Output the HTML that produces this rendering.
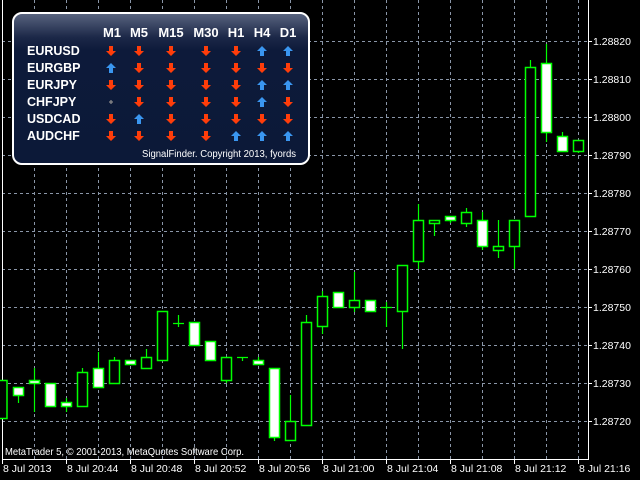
<!DOCTYPE html>
<html><head><meta charset="utf-8"><style>
html,body{margin:0;padding:0;background:#000;width:640px;height:480px;overflow:hidden}
svg{display:block}
text{font-family:"Liberation Sans",sans-serif}
</style></head><body>
<svg width="640" height="480" viewBox="0 0 640 480" xmlns="http://www.w3.org/2000/svg">
<defs>
<linearGradient id="pg" x1="0" y1="0" x2="0" y2="1">
<stop offset="0" stop-color="#5a6580"/>
<stop offset="0.16" stop-color="#1c2848"/>
<stop offset="0.25" stop-color="#0d1a3a"/>
<stop offset="1" stop-color="#0c1938"/>
</linearGradient>
<path id="dn" d="M-2,-5H2V0H5L0,5L-5,0H-2Z" fill="#ff3d0a"/>
<path id="up" d="M-2,5H2V0H5L0,-5L-5,0H-2Z" fill="#3a96f0"/>
</defs>
<g stroke="#8a96a8" stroke-width="1" stroke-dasharray="3,3">
<path d="M2,41.5H588M2,79.5H588M2,117.5H588M2,155.5H588M2,193.5H588M2,231.5H588M2,269.5H588M2,307.5H588M2,345.5H588M2,383.5H588M2,421.5H588"/>
<path d="M34.5,0V459M66.5,0V459M98.5,0V459M130.5,0V459M162.5,0V459M194.5,0V459M226.5,0V459M258.5,0V459M290.5,0V459M322.5,0V459M354.5,0V459M386.5,0V459M418.5,0V459M450.5,0V459M482.5,0V459M514.5,0V459M546.5,0V459M578.5,0V459"/>
</g>
<g stroke="#fff" stroke-width="1" fill="none">
<path d="M2.5,0V459.5H588.5V0"/>
<path d="M2.5,459V464M66.5,459V464M130.5,459V464M194.5,459V464M258.5,459V464M322.5,459V464M386.5,459V464M450.5,459V464M514.5,459V464M578.5,459V464"/>
<path d="M588,41.5H592M588,79.5H592M588,117.5H592M588,155.5H592M588,193.5H592M588,231.5H592M588,269.5H592M588,307.5H592M588,345.5H592M588,383.5H592M588,421.5H592"/>
</g>
<g fill="#fff" font-size="10.5">
<text x="593" y="45">1.28820</text><text x="593" y="83">1.28810</text><text x="593" y="121">1.28800</text><text x="593" y="159">1.28790</text><text x="593" y="197">1.28780</text><text x="593" y="235">1.28770</text><text x="593" y="273">1.28760</text><text x="593" y="311">1.28750</text><text x="593" y="349">1.28740</text><text x="593" y="387">1.28730</text><text x="593" y="425">1.28720</text>
<text x="3" y="472">8 Jul 2013</text><text x="67" y="472">8 Jul 20:44</text><text x="131" y="472">8 Jul 20:48</text><text x="195" y="472">8 Jul 20:52</text><text x="259" y="472">8 Jul 20:56</text><text x="323" y="472">8 Jul 21:00</text><text x="387" y="472">8 Jul 21:04</text><text x="451" y="472">8 Jul 21:08</text><text x="515" y="472">8 Jul 21:12</text><text x="579" y="472">8 Jul 21:16</text>
<text x="5" y="455" textLength="239" lengthAdjust="spacingAndGlyphs">MetaTrader 5, © 2001-2013, MetaQuotes Software Corp.</text>
</g>
<g stroke="#00ff00" stroke-width="1.2">
<!-- wicks -->
<path d="M18.5,395V403M34.5,368V412M66.5,398V412M82.5,368V372M98.5,352V368M114.5,357V360M146.5,349V357M178.5,315V327M173,323.5H184M242.5,357V361M237,357.5H248M258.5,357V360M274.5,437V441M290.5,395V421M306.5,315V322M322.5,291V334M354.5,272V312M386.5,302V327M381,307.5H392M402.5,311V349M418.5,204V269M434.5,223V236M450.5,220V223M466.5,208V227M482.5,212V250M498.5,220V258M514.5,246V269M530.5,60V67M546.5,44V142M562.5,132V136M578.5,151V153M226.5,380V383"/>
</g>
<g stroke="#00ff00" stroke-width="1.5">
<rect x="-3" y="380.5" width="10" height="38" fill="#000"/>
<rect x="13.5" y="387.5" width="10" height="8" fill="#fff"/>
<rect x="29.5" y="380.5" width="10" height="3" fill="#fff"/>
<rect x="45.5" y="383.5" width="10" height="23" fill="#fff"/>
<rect x="61.5" y="402.5" width="10" height="4" fill="#fff"/>
<rect x="77.5" y="372.5" width="10" height="34" fill="#000"/>
<rect x="93.5" y="368.5" width="10" height="19" fill="#fff"/>
<rect x="109.5" y="360.5" width="10" height="23" fill="#000"/>
<rect x="125.5" y="360.5" width="10" height="4" fill="#fff"/>
<rect x="141.5" y="357.5" width="10" height="11" fill="#000"/>
<rect x="157.5" y="311.5" width="10" height="49" fill="#000"/>
<rect x="189.5" y="322.5" width="10" height="23" fill="#fff"/>
<rect x="205.5" y="341.5" width="10" height="19" fill="#fff"/>
<rect x="221.5" y="357.5" width="10" height="23" fill="#000"/>
<rect x="253.5" y="360.5" width="10" height="4" fill="#fff"/>
<rect x="269.5" y="368.5" width="10" height="69" fill="#fff"/>
<rect x="285.5" y="421.5" width="10" height="19" fill="#000"/>
<rect x="301.5" y="322.5" width="10" height="103" fill="#000"/>
<rect x="317.5" y="296.5" width="10" height="30" fill="#000"/>
<rect x="333.5" y="292.5" width="10" height="15" fill="#fff"/>
<rect x="349.5" y="300.5" width="10" height="7" fill="#000"/>
<rect x="365.5" y="300.5" width="10" height="11" fill="#fff"/>
<rect x="397.5" y="265.5" width="10" height="46" fill="#000"/>
<rect x="413.5" y="220.5" width="10" height="41" fill="#000"/>
<rect x="429.5" y="220.5" width="10" height="3" fill="#000"/>
<rect x="445.5" y="216.5" width="10" height="4" fill="#fff"/>
<rect x="461.5" y="212.5" width="10" height="11" fill="#000"/>
<rect x="477.5" y="220.5" width="10" height="26" fill="#fff"/>
<rect x="493.5" y="246.5" width="10" height="4" fill="#000"/>
<rect x="509.5" y="220.5" width="10" height="26" fill="#000"/>
<rect x="525.5" y="67.5" width="10" height="149" fill="#000"/>
<rect x="541.5" y="63.5" width="10" height="69" fill="#fff"/>
<rect x="557.5" y="136.5" width="10" height="15" fill="#fff"/>
<rect x="573.5" y="140.5" width="10" height="11" fill="#000"/>
</g>
<!-- panel -->
<rect x="13" y="13" width="296" height="151" rx="9" fill="url(#pg)" stroke="#fff" stroke-width="2"/>
<g fill="#fff" font-size="13" font-weight="bold" text-anchor="middle">
<text x="112" y="37">M1</text><text x="139" y="37">M5</text><text x="171" y="37">M15</text><text x="206" y="37">M30</text><text x="236" y="37">H1</text><text x="262" y="37">H4</text><text x="288" y="37">D1</text>
</g>
<g fill="#fff" font-size="12.5" font-weight="bold">
<text x="27" y="55">EURUSD</text><text x="27" y="72">EURGBP</text><text x="27" y="89">EURJPY</text><text x="27" y="106">CHFJPY</text><text x="27" y="123">USDCAD</text><text x="27" y="140">AUDCHF</text>
</g>
<g>
<use href="#dn" x="111" y="51"/><use href="#dn" x="139" y="51"/><use href="#dn" x="171" y="51"/><use href="#dn" x="206" y="51"/><use href="#dn" x="236" y="51"/><use href="#up" x="262" y="51"/><use href="#up" x="288" y="51"/>
<use href="#up" x="111" y="68"/><use href="#dn" x="139" y="68"/><use href="#dn" x="171" y="68"/><use href="#dn" x="206" y="68"/><use href="#dn" x="236" y="68"/><use href="#dn" x="262" y="68"/><use href="#dn" x="288" y="68"/>
<use href="#dn" x="111" y="85"/><use href="#dn" x="139" y="85"/><use href="#dn" x="171" y="85"/><use href="#dn" x="206" y="85"/><use href="#dn" x="236" y="85"/><use href="#up" x="262" y="85"/><use href="#up" x="288" y="85"/>
<path d="M111,100V104M109,102H113" stroke="#888" stroke-width="1.3"/><use href="#dn" x="139" y="102"/><use href="#dn" x="171" y="102"/><use href="#dn" x="206" y="102"/><use href="#dn" x="236" y="102"/><use href="#up" x="262" y="102"/><use href="#dn" x="288" y="102"/>
<use href="#dn" x="111" y="119"/><use href="#up" x="139" y="119"/><use href="#dn" x="171" y="119"/><use href="#dn" x="206" y="119"/><use href="#dn" x="236" y="119"/><use href="#dn" x="262" y="119"/><use href="#dn" x="288" y="119"/>
<use href="#dn" x="111" y="136"/><use href="#dn" x="139" y="136"/><use href="#dn" x="171" y="136"/><use href="#dn" x="206" y="136"/><use href="#up" x="236" y="136"/><use href="#up" x="262" y="136"/><use href="#up" x="288" y="136"/>
</g>
<text x="296" y="157" fill="#fff" font-size="10" text-anchor="end" textLength="154" lengthAdjust="spacingAndGlyphs">SignalFinder. Copyright 2013, fyords</text>
</svg>
</body></html>
